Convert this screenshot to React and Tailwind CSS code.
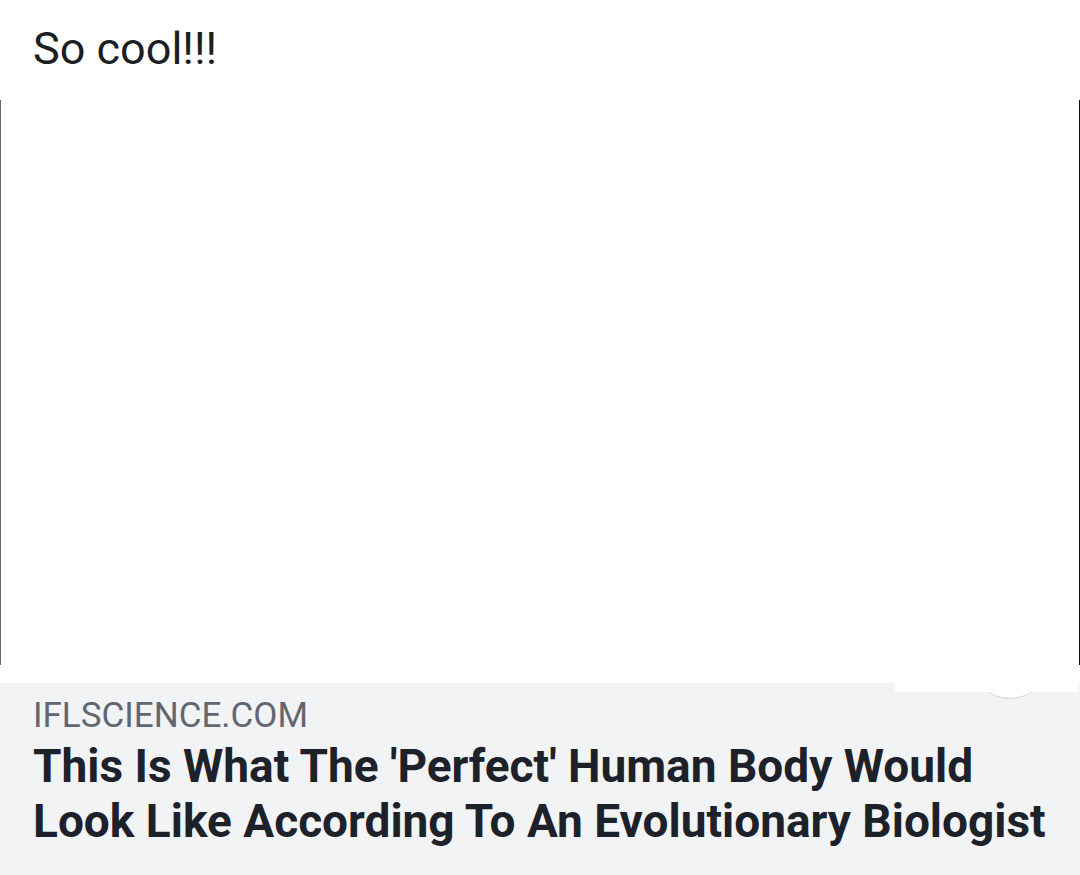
import React from "react";

const App = () => {
  return (
    <div className="flex flex-col w-[1080px] h-[875px] bg-white overflow-hidden font-['Roboto',sans-serif]">
      {/* Post text */}
      <div className="flex h-[100px] shrink-0 pl-[33px] pt-[21px]">
        <p className="text-[45px] leading-[56px] text-[#1c1e21]">So cool!!!</p>
      </div>

      {/* Shared image */}
      <div className="h-[565px] shrink-0 bg-white border-l border-r border-l-[#6b6565] border-r-[#111111]" />
      <div className="h-[18px] shrink-0 bg-white" />

      {/* Link preview */}
      <div className="relative flex flex-col gap-[3px] flex-1 bg-[#f2f3f5] pl-[33px] pt-[13px]">
        {/* white strip + play circle overlapping the preview */}
        <div className="absolute right-[1px] top-[-18px] w-[184px] h-[27px] bg-white" />
        <div className="absolute right-[1px] top-[9px] w-[184px] h-[9px] overflow-hidden">
          <div className="absolute left-[74px] top-[-75px] w-[82px] h-[82px] rounded-full bg-white border border-[#d4d4d4]" />
        </div>
        <p className="text-[35px] leading-[40px] text-[#606770] uppercase">IFLSCIENCE.COM</p>
        <h1 className="text-[46px] leading-[55px] font-bold text-[#1d2129]">
          This Is What The 'Perfect' Human Body Would
          <br />
          Look Like According To An Evolutionary Biologist
        </h1>
      </div>
    </div>
  );
};

export default App;
